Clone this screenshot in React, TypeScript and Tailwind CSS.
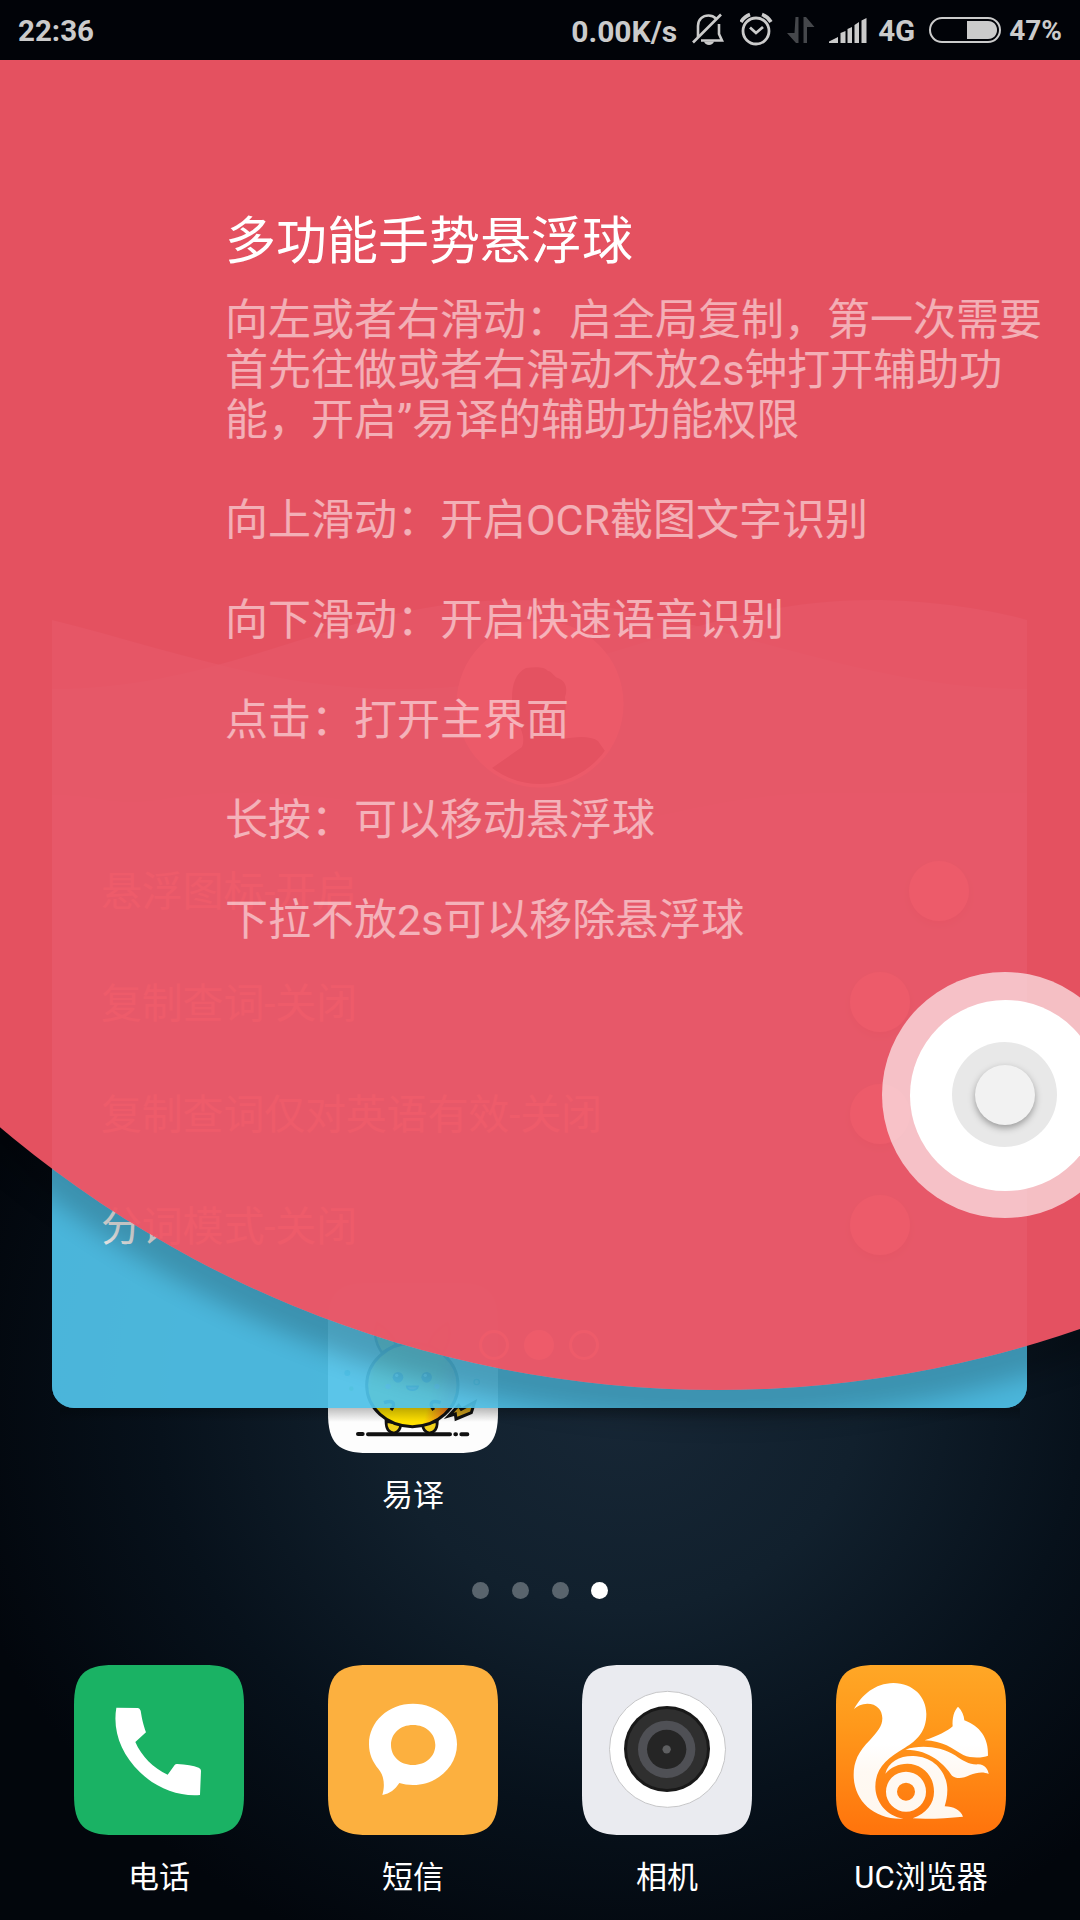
import React from "react";

const SQUIRCLE =
  "M0 40C0 10 10 0 40 0H130C160 0 170 10 170 40V130C170 160 160 170 130 170H40C10 170 0 160 0 130Z";

function AppIcon({ fill, viewBox, children }: { fill: string; viewBox: string; children: React.ReactNode }) {
  return (
    <svg width="170" height="170" viewBox="0 0 170 170" className="block">
      <defs>
        <linearGradient id="uc" x1="0" y1="0" x2="0" y2="1">
          <stop offset="0" stopColor="#ffa726" />
          <stop offset="0.35" stopColor="#ff991b" />
          <stop offset="1" stopColor="#ff730c" />
        </linearGradient>
        <linearGradient id="ucWhite" x1="0" y1="129" x2="0" y2="538" gradientUnits="userSpaceOnUse">
          <stop offset="0.45" stopColor="#ffffff" />
          <stop offset="0.65" stopColor="#fff9f3" />
          <stop offset="1" stopColor="#fff7ee" />
        </linearGradient>
        <linearGradient id="yellow" x1="0" y1="0" x2="1" y2="0.2">
          <stop offset="0" stopColor="#fff8dc" />
          <stop offset="0.16" stopColor="#ffe400" />
          <stop offset="0.78" stopColor="#ffe000" />
          <stop offset="1" stopColor="#f47a1e" />
        </linearGradient>
      </defs>
      <path d={SQUIRCLE} fill={fill} />
      <svg width="170" height="170" viewBox={viewBox}>
        {children}
      </svg>
    </svg>
  );
}

function LauncherApp({ label, children }: { label: string; children: React.ReactNode }) {
  return (
    <div className="flex w-[170px] flex-col items-center">
      {children}
      <span className="mt-[20px] whitespace-nowrap text-[31px] leading-[46px] text-white">{label}</span>
    </div>
  );
}

function YiyiIcon() {
  return (
    <AppIcon fill="#fdfdfd" viewBox="84 69 510 510">
      <path d="M246 278C222 245 222 210 232 190C258 205 280 228 288 254Z" fill="#ffe000" stroke="#111" strokeWidth="8" />
      <path d="M428 278C452 245 452 210 442 190C416 205 394 228 386 254Z" fill="#ffe000" stroke="#111" strokeWidth="8" />
      <path d="M446 468L476 436L484 448L524 426L514 458L468 477L466 462Z" fill="#d8a81c" stroke="#111" strokeWidth="9" />
      <path d="M258 484C258 508 268 518 282 519C296 516 302 506 302 492Z" fill="#f2d21a" stroke="#111" strokeWidth="8" />
      <path d="M412 484C412 508 402 518 388 519C374 516 368 506 368 492Z" fill="#f2d21a" stroke="#111" strokeWidth="8" />
      <ellipse cx="337" cy="375" rx="137" ry="125" fill="url(#yellow)" stroke="#111" strokeWidth="9" />
      <circle cx="294" cy="352" r="16" fill="#222" />
      <circle cx="290" cy="346" r="5" fill="#fff" />
      <circle cx="380" cy="352" r="16" fill="#222" />
      <circle cx="376" cy="346" r="5" fill="#fff" />
      <path d="M320 379H354C352 394 322 394 320 379Z" fill="#c44" stroke="#222" strokeWidth="5" />
      <circle cx="264" cy="379" r="8" fill="#f9a" />
      <circle cx="411" cy="379" r="8" fill="#f9a" />
      <path d="M252 428C276 420 290 426 273 450M422 428C398 420 384 426 401 450" fill="none" stroke="#111" strokeWidth="10" />
      <circle cx="142" cy="339" r="9" fill="#4ac" />
      <circle cx="530" cy="366" r="8" fill="none" stroke="#4ac" strokeWidth="4" />
      <circle cx="154" cy="386" r="7" fill="#9d8" />
      <path d="M174 522H188M204 523H450M466 523H468M484 523H502" stroke="#111" strokeWidth="12" strokeLinecap="round" />
    </AppIcon>
  );
}

function PhoneIcon() {
  return (
    <AppIcon fill="#1ab264" viewBox="72 75 510 510">
      <path
        fill="#fff"
        d="M199 203.500L264 204Q269 204 272 212C276 238 280 254 288 277L256 306C274 348 310 385 353 404L374 375Q377 371 382 372C408 374 430 377 446 383Q453 386 453 392L450 465C385 470 320 445 270 397C215 343 187 275 199 203.500Z"
      />
    </AppIcon>
  );
}

function MessageIcon() {
  return (
    <AppIcon fill="#fcb03f" viewBox="54 75 510 510">
      <path
        fill="#fff"
        fillRule="evenodd"
        d="M309 191.500C384 191.500 441 246 441 313C441 380 382 435 309 435C294 435 280 433 268 429C255 449 240 461 217 465C225 438 223 408 206 388C188 366 177 342 177 313C177 246 234 191.500 309 191.500ZM309 255C270 255 243 281 243 315C243 349 270 375 309 375C348 375 376 349 376 315C376 281 348 255 309 255Z"
      />
    </AppIcon>
  );
}

function CameraIcon() {
  return (
    <AppIcon fill="#eaebf0" viewBox="66 75 510 510">
      <circle cx="322.500" cy="328" r="174" fill="#fff" stroke="#c6c6c8" strokeWidth="3" />
      <circle cx="321" cy="327" r="129" fill="#191919" />
      <circle cx="321" cy="327" r="120" fill="#2f2f2f" />
      <circle cx="320" cy="328" r="86" fill="#4f5055" />
      <circle cx="320" cy="328" r="59" fill="#252525" />
      <circle cx="320" cy="328" r="12.500" fill="#5e5f61" />
    </AppIcon>
  );
}

function BrowserIcon() {
  return (
    <AppIcon fill="url(#uc)" viewBox="48 75 510 510">
      <g fill="url(#ucWhite)">
        <path d="M102 207C125 165 165 130 220 129C280 130 319 170 319 222C319 275 290 302 255 323C200 355 166 385 166 440C166 485 200 528 250 536C160 540 101 480 101 405C101 365 115 335 150 300C172 275 187 260 187 235C187 210 170 191 142 191C125 191 112 198 102 207Z" />
        <path d="M314 301C350 290 385 272 398 259C396 235 402 212 414 200C426 212 432 226 433 241C480 258 506 295 504 347C490 353 455 356 430 345C395 325 370 303 314 301Z" />
        <path d="M256 329C300 314 360 318 405 346C430 364 450 375 475 373C495 374 504 388 506 402C490 394 470 397 450 405C430 415 410 418 396 407C375 375 330 328 256 329Z" />
        <path d="M196 401C205 365 240 347 280 348C345 350 382 400 382 450C382 470 378 485 374 499C400 499 422 510 429 530C380 535 320 538 278 535C320 520 342 490 342 455C342 405 305 371 262 371C235 371 212 382 196 401Z" />
        <path fillRule="evenodd" d="M258 395a60 60 0 1 1 0 120a60 60 0 1 1 0-120ZM258 428a27 27 0 1 0 0 54a27 27 0 1 0 0-54Z" />
      </g>
    </AppIcon>
  );
}

function StatusBar() {
  return (
    <header className="flex h-[60px] shrink-0 items-center bg-[#010308] text-[29.500px] font-bold text-[#cbcbcb]">
      <span className="ml-[18px] pt-[3px]">22:36</span>
      <span className="ml-auto pt-[3px] text-[30px]">0.00K/s</span>
      <svg className="ml-[15px]" width="32" height="60" viewBox="0 0 32 60" fill="none" stroke="#cbcbcb" strokeWidth="2.6">
        <path d="M6 37V26C6 19 11 15.500 16.500 15.500C20 15.500 22.500 17 24 18.500M27 24V34L30 40.500H9" />
        <path d="M1 42.500L29 14.500" />
        <path d="M12 41.500H22C21 46 13 46 12 41.500Z" fill="#cbcbcb" stroke="none" />
      </svg>
      <svg className="ml-[16px]" width="34" height="60" viewBox="0 0 34 60" fill="none" stroke="#cbcbcb" strokeWidth="2.8">
        <circle cx="16" cy="31" r="13" />
        <path d="M10 27.500L16 33L23 27" />
        <path d="M1 22C3 18.500 6 16 10 14.500M31 22C29 18.500 26 16 22 14.500" strokeWidth="3.600" />
      </svg>
      <svg className="ml-[13px]" width="30" height="60" viewBox="0 0 30 60" fill="#45474b">
        <path d="M8.500 17H11.500V43H9L0 33H7.500ZM16.500 17H19L27.500 27H20V43H16.500Z" />
      </svg>
      <svg className="ml-[12px]" width="38" height="60" viewBox="0 0 38 60" fill="#cbcbcb">
        <path d="M0 43V41.500L9 37V43ZM11.500 43V33L16.500 31V43ZM18.500 43V29L23 27V43ZM25.500 43V25L30 22V43ZM32.500 43V20.500L37.500 18V43Z" />
      </svg>
      <span className="ml-[11px] w-[38px] pt-[3px] text-[29.500px]">4G</span>
      <svg className="ml-[12px]" width="74" height="60" viewBox="0 0 74 60">
        <rect x="2" y="18" width="70" height="24" rx="12" fill="none" stroke="#cbcbcb" strokeWidth="2" />
        <path d="M39 21H60C72 21 72 39 60 39H39Z" fill="#cbcbcb" />
      </svg>
      <span className="ml-[7px] mr-[18px] pt-[2px] text-[28px]">47%</span>
    </header>
  );
}

function SettingRow({ label, on }: { label: string; on?: boolean }) {
  return (
    <div className="flex h-[111.500px] items-center justify-between pl-[49px] pr-[58px]">
      <span className="whitespace-nowrap pt-[4px] text-[41px] tracking-[-0.2px] text-[#f0f0f0]">{label}</span>
      <span className={on ? "flex w-[120px] justify-end" : "flex w-[119px] justify-start"}>
        <span className="h-[60px] w-[60px] rounded-full bg-[#f1f1f1]/90 shadow-[0_4px_8px_rgba(0,0,0,0.4)]" />
      </span>
    </div>
  );
}

function FloatingCard() {
  return (
    <section className="absolute left-[52px] top-[590px] h-[818px] w-[975px] overflow-hidden rounded-b-[22px]">
      <svg className="absolute left-0 top-0" width="975" height="818" viewBox="0 0 975 818" fill="#50c1e8">
        <path fillOpacity="0.6" d="M0 30C120 60 220 99 350 99C530 99 640 10 820 10C880 10 940 20 975 30V818H0Z" />
        <path fillOpacity="0.6" d="M0 99C180 99 290 10 464 10C640 10 790 99 975 99V818H0Z" />
        <path fillOpacity="0.6" d="M0 205C40 205 50 212 80 212C110 212 130 203 180 203C350 203 380 240 480 240C600 240 650 203 780 203H975V818H0Z" />
      </svg>
      <div className="relative flex h-full flex-col">
        <div className="flex justify-center pt-[31px]">
          <svg width="168" height="168" viewBox="0 0 168 168">
            <defs>
              <clipPath id="face">
                <circle cx="84" cy="83" r="80" />
              </clipPath>
            </defs>
            <circle cx="84" cy="83" r="83.500" fill="#f0f0f0" fillOpacity="0.8" />
            <g clipPath="url(#face)" fill="#101820">
              <path d="M56 78C56 62 60 52 70 47C78 46 88 45 92 50C96 50 98 56 102 57C110 60 112 68 109 76C111 92 108 104 106 118C118 116 134 114 142 120L156 140V168H20L36 147L66 126C70 116 64 106 60 98C57 92 56 86 56 78Z" />
            </g>
          </svg>
        </div>
        <div className="mt-[46px]">
          <SettingRow label="悬浮图标-开启" on />
          <SettingRow label="复制查词-关闭" />
          <SettingRow label="复制查词仅对英语有效-关闭" />
          <SettingRow label="分词模式-关闭" />
        </div>
        <div className="mr-[2px] mt-[49px] flex justify-center gap-[15px]">
          <span className="h-[30px] w-[30px] rounded-full border-[3px] border-white/90" />
          <span className="h-[30px] w-[30px] rounded-full bg-white/90" />
          <span className="h-[30px] w-[30px] rounded-full border-[3px] border-white/90" />
        </div>
      </div>
    </section>
  );
}

function GestureGuide() {
  return (
    <div className="absolute inset-x-0 bottom-0 top-[60px] overflow-hidden">
      <div className="absolute -left-[393px] -top-[890px] h-[2220px] w-[2220px] rounded-full bg-[#ed5464]/96 shadow-[0_26px_24px_4px_rgba(0,0,0,0.2)]" />
      <div className="relative pl-[225px] pt-[146px]">
        <h1 className="text-[51px] font-normal leading-[72px] text-white">多功能手势悬浮球</h1>
        <p className="mt-[17px] whitespace-pre text-[43px] font-normal leading-[50px] text-white/54">
          {"向左或者右滑动：启全局复制，第一次需要\n首先往做或者右滑动不放2s钟打开辅助功\n能，开启”易译的辅助功能权限\n\n向上滑动：开启OCR截图文字识别\n\n向下滑动：开启快速语音识别\n\n点击：打开主界面\n\n长按：可以移动悬浮球\n\n下拉不放2s可以移除悬浮球"}
        </p>
      </div>
      <div className="absolute left-[882px] top-[912px] flex h-[246px] w-[246px] items-center justify-center rounded-full bg-white/63">
        <div className="flex h-[191px] w-[191px] items-center justify-center rounded-full bg-white pb-[1px] pr-[1px]">
          <div className="flex h-[105px] w-[105px] items-center justify-center rounded-full bg-[#e8e8e8]">
            <div className="h-[60px] w-[60px] rounded-full bg-[#f2f2f2] shadow-[0_3px_7px_rgba(0,0,0,0.34)]" />
          </div>
        </div>
      </div>
    </div>
  );
}

export default function App() {
  return (
    <main
      lang="zh-CN"
      className="relative flex h-[1920px] w-[1080px] flex-col overflow-hidden bg-[#02060b] bg-[radial-gradient(ellipse_680px_600px_at_620px_1400px,#172736_0%,#11202d_35%,#07111b_68%,#02060c_100%)] font-['Roboto','Noto_Sans_CJK_SC',sans-serif]"
    >
      <StatusBar />
      <div className="mt-[1223px] grid grid-cols-4 gap-[84px] px-[74px]">
        <div className="col-start-2">
          <LauncherApp label="易译">
            <YiyiIcon />
          </LauncherApp>
        </div>
      </div>
      <div className="mr-px mt-[62.5px] flex justify-center gap-[23px]">
        <span className="h-[17px] w-[17px] rounded-full bg-[#59646d]" />
        <span className="h-[17px] w-[17px] rounded-full bg-[#59646d]" />
        <span className="h-[17px] w-[17px] rounded-full bg-[#59646d]" />
        <span className="-ml-px h-[17px] w-[17px] rounded-full bg-white" />
      </div>
      <nav className="mt-[66.5px] grid grid-cols-4 gap-[84px] px-[74px]">
        <LauncherApp label="电话">
          <PhoneIcon />
        </LauncherApp>
        <LauncherApp label="短信">
          <MessageIcon />
        </LauncherApp>
        <LauncherApp label="相机">
          <CameraIcon />
        </LauncherApp>
        <LauncherApp label="UC浏览器">
          <BrowserIcon />
        </LauncherApp>
      </nav>
      <FloatingCard />
      <div className="absolute left-[60px] top-[1408px] h-[14px] w-[960px] bg-gradient-to-b from-black/25 to-transparent" />
      <GestureGuide />
    </main>
  );
}
